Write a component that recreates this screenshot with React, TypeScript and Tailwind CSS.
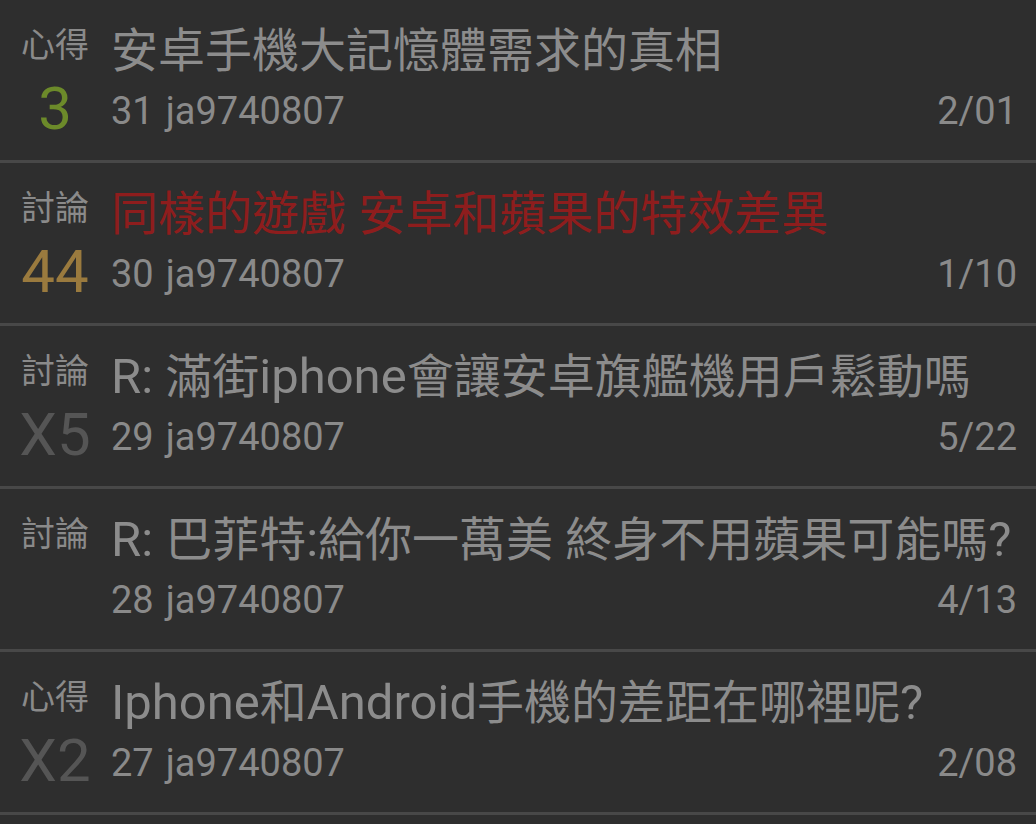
const font = { fontFamily: 'Roboto, "Noto Sans CJK TC", sans-serif' }

type Post = {
  tag: string
  count: string
  countColor: string
  title: string
  titleColor: string
  no: string
  date: string
}

const posts: Post[] = [
  { tag: '心得', count: '3', countColor: 'text-[#6c8a2a]', title: '安卓手機大記憶體需求的真相', titleColor: 'text-[#8c8c8c]', no: '31', date: '2/01' },
  { tag: '討論', count: '44', countColor: 'text-[#9a7a3e]', title: '同樣的遊戲 安卓和蘋果的特效差異', titleColor: 'text-[#8e1d1d]', no: '30', date: '1/10' },
  { tag: '討論', count: 'X5', countColor: 'text-[#555555]', title: 'R: 滿街iphone會讓安卓旗艦機用戶鬆動嗎', titleColor: 'text-[#8c8c8c]', no: '29', date: '5/22' },
  { tag: '討論', count: '', countColor: 'text-[#555555]', title: 'R: 巴菲特:給你一萬美 終身不用蘋果可能嗎?', titleColor: 'text-[#8c8c8c]', no: '28', date: '4/13' },
  { tag: '心得', count: 'X2', countColor: 'text-[#555555]', title: 'Iphone和Android手機的差距在哪裡呢?', titleColor: 'text-[#8c8c8c]', no: '27', date: '2/08' },
]

// latin runs render a bit larger than the CJK fallback glyphs
function Title({ text }: { text: string }) {
  const parts = text.split(/([\u2E80-\u9FFF\uF900-\uFAFF]+)/)
  return (
    <>
      {parts.map((s, i) =>
        /[\u2E80-\u9FFF]/.test(s) ? (
          <span key={i} className="text-[47px]">{s}</span>
        ) : (
          <span key={i}>{s}</span>
        )
      )}
    </>
  )
}

function Row({ p }: { p: Post }) {
  return (
    <div className="h-[163px] border-b-[3px] border-[#484848] grid grid-cols-[110px_1fr] pt-[25px]">
      <div className="flex flex-col items-center">
        <div className="text-[34px] leading-[40px] text-[#8a8a8a] whitespace-nowrap">{p.tag}</div>
        <div className={`mt-[14px] text-[60px] leading-[60px] h-[60px] ${p.countColor}`}>{p.count}</div>
      </div>
      <div className="pl-[1px] pr-[19px] min-w-0">
        <div className={`text-[49px] leading-[52px] whitespace-nowrap ${p.titleColor}`}>
          <Title text={p.title} />
        </div>
        <div className="mt-[12px] flex justify-between text-[38px] leading-[44px] text-[#8a8a8a]">
          <span>
            {p.no}
            <span className="ml-[12px]">ja9740807</span>
          </span>
          <span>{p.date}</span>
        </div>
      </div>
    </div>
  )
}

export default function App() {
  return (
    <div className="w-[1036px] h-[824px] bg-[#2e2e2e] overflow-hidden" style={font}>
      {posts.map((p) => (
        <Row key={p.no} p={p} />
      ))}
    </div>
  )
}
